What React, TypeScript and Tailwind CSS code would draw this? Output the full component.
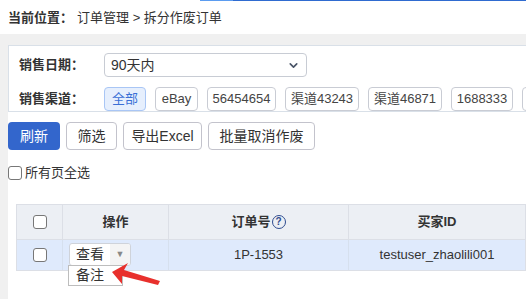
import { ChevronDown } from "lucide-react";

const channels = [
  { label: "全部", w: "w-[42px]" },
  { label: "eBay", w: "w-[43px]" },
  { label: "56454654", w: "w-[69px]" },
  { label: "渠道43243", w: "w-[74px]" },
  { label: "渠道46871", w: "w-[74px]" },
  { label: "1688333", w: "w-[62px]" },
  { label: "", w: "w-[40px]" },
];

const Checkbox = () => (
  <span className="inline-block h-[14px] w-[14px] shrink-0 rounded-[3px] border border-[#777] bg-white" />
);

const Arrow = () => (
  <svg
    className="absolute left-[108px] top-[260px]"
    width="56"
    height="28"
    viewBox="0 0 56 28"
  >
    <polygon points="4,12 20,3 16,10 52,21 50,25 14,16 14,24" fill="#e8302c" />
  </svg>
);

export default function App() {
  return (
    <div
      className="relative h-[299px] w-[526px] overflow-hidden bg-[#f0f0f0] text-[13px] text-[#333]"
      style={{ fontFamily: '"Liberation Sans", "Noto Sans CJK SC", sans-serif' }}
    >
      <div className="flex h-[34px] flex-col bg-white">
        <div className="flex h-px">
          <div className="w-[200px]" />
          <div className="w-[33px] bg-[#5b9cf0]" />
          <div className="flex-1 bg-[#2f6bd0]" />
        </div>
        <div className="flex flex-1 items-center pl-2">
          <span className="font-bold">当前位置：</span>
          <span className="ml-1">订单管理 &gt; 拆分作废订单</span>
        </div>
      </div>

      <div className="mt-[11px] ml-2 h-[260px] bg-white">
        <div className="flex flex-col gap-[10px] border-t border-b border-l border-[#d9e0e8] pl-[10px] pt-[7px]">
          <div className="flex items-center">
            <span className="w-[85px] shrink-0 font-bold">销售日期：</span>
            <div className="flex h-[24px] w-[203px] items-center justify-between rounded-[4px] border border-[#c8ccd4] px-[6px] text-[14px]">
              <span>90天内</span>
              <ChevronDown size={13} strokeWidth={3} className="text-[#4a5568]" />
            </div>
          </div>
          <div className="flex items-center overflow-hidden">
            <span className="w-[85px] shrink-0 font-bold">销售渠道：</span>
            <div className="flex gap-[9px]">
              {channels.map((c, i) => (
                <span
                  key={i}
                  className={
                    i === 0
                      ? `flex h-[24px] shrink-0 items-center justify-center whitespace-nowrap rounded-[4px] border border-[#a9c6f5] bg-[#e6effd] text-[#3a6fd6] ${c.w}`
                      : `flex h-[24px] shrink-0 items-center justify-center whitespace-nowrap rounded-[4px] border border-[#c9ccd4] text-[#444] ${c.w}`
                  }
                >
                  {c.label}
                </span>
              ))}
            </div>
          </div>
        </div>

        <div className="mt-[10px] flex gap-[6px]">
          <button className="h-[28px] w-[52px] rounded-[4px] bg-[#3366cc] text-[14px] text-white">
            刷新
          </button>
          <button className="h-[28px] w-[51px] rounded-[4px] border border-[#c3c3cc] text-[14px]">
            筛选
          </button>
          <button className="h-[28px] w-[79px] rounded-[4px] border border-[#c3c3cc] text-[14px]">
            导出Excel
          </button>
          <button className="h-[28px] w-[107px] rounded-[4px] border border-[#c3c3cc] text-[14px]">
            批量取消作废
          </button>
        </div>

        <div className="mt-[13px] flex items-center gap-[3px]">
          <Checkbox />
          <span>所有页全选</span>
        </div>

        <div className="mt-[21px] ml-2 border border-[#dcdfe6] text-[13px]">
          <div className="flex h-[34px] bg-[#eceff4] font-bold">
            <div className="flex w-[46px] items-center justify-center border-r border-[#dcdfe6]">
              <Checkbox />
            </div>
            <div className="flex w-[106px] items-center justify-center border-r border-[#dcdfe6]">
              操作
            </div>
            <div className="flex w-[180px] items-center justify-center border-r border-[#dcdfe6]">
              订单号
              <span className="ml-[1px] flex h-[14px] w-[14px] items-center justify-center rounded-full border border-[#2f4c8f] text-[10px] text-[#2f4c8f]">
                ?
              </span>
            </div>
            <div className="flex flex-1 items-center justify-center">买家ID</div>
          </div>
          <div className="flex h-[31px] border-t border-[#dcdfe6] bg-[#dfeafc]">
            <div className="flex w-[46px] items-center justify-center border-r border-[#d6e0ee]">
              <Checkbox />
            </div>
            <div className="relative flex w-[106px] items-center border-r border-[#d6e0ee] pl-[6px]">
              <div className="flex h-[23px] w-[62px] overflow-hidden rounded-[3px] border border-[#cfd3da] bg-white text-[14px]">
                <span className="flex w-[40px] items-center justify-center">查看</span>
                <span className="flex flex-1 items-center justify-center bg-[#f4f4f4] text-[9px] text-[#888]">
                  ▼
                </span>
              </div>
              <div className="absolute left-[5px] top-[25px] flex h-[21px] w-[55px] items-center border border-[#bdbdbd] bg-white pl-[7px] text-[14px]">
                备注
              </div>
            </div>
            <div className="flex w-[180px] items-center justify-center border-r border-[#d6e0ee]">
              1P-1553
            </div>
            <div className="flex flex-1 items-center justify-center">testuser_zhaolili001</div>
          </div>
        </div>
      </div>

      <Arrow />
    </div>
  );
}
